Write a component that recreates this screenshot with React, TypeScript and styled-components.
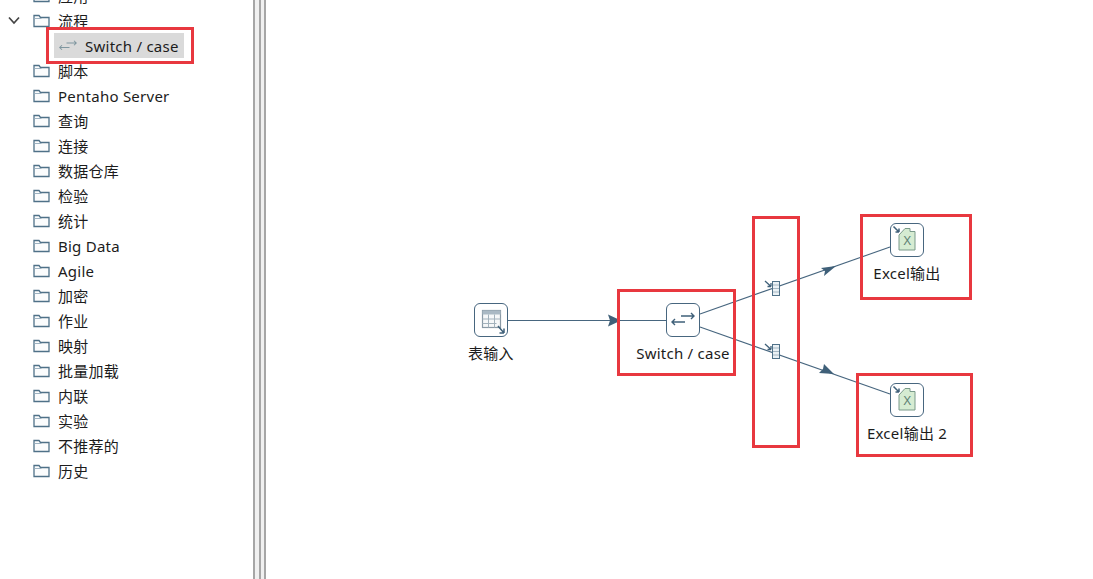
import React from 'react'
import styled, { createGlobalStyle } from 'styled-components'

const GlobalStyle = createGlobalStyle`
  html, body {
    margin: 0;
    height: 100%;
    background: #fff;
    overflow: hidden;
  }
  #root {
    height: 100%;
  }
`

const Page = styled.div`
  display: flex;
  width: 1093px;
  height: 579px;
  overflow: hidden;
  background: #fff;
  color: #1c1c1c;
  font-family: 'Noto Sans', 'Noto Sans CJK SC', sans-serif;
  font-size: 15px;
  letter-spacing: 0.25px;
`

const Sidebar = styled.aside`
  width: 253px;
  flex-shrink: 0;
  overflow: hidden;
`

const Tree = styled.ul`
  list-style: none;
  margin: -17px 0 0;
  padding: 0;
`

const Row = styled.li`
  display: flex;
  align-items: center;
  height: 25px;
  padding-left: 33px;
`

const Chevron = styled.svg`
  width: 14px;
  height: 9px;
  margin-left: -26px;
  margin-right: 12px;
  flex-shrink: 0;
`

const Folder = styled.svg`
  width: 17px;
  height: 14px;
  margin-right: 8px;
  flex-shrink: 0;
`

const SelectedRow = styled.li`
  position: relative;
  display: flex;
  align-items: center;
  height: 25px;
  margin-left: 54px;
  width: 130px;
  padding-left: 5px;
  box-sizing: border-box;
  background: #dadada;

  &::after {
    content: '';
    position: absolute;
    left: -8px;
    top: -6px;
    width: 148px;
    height: 37px;
    box-sizing: border-box;
    border: 3px solid #e8383f;
  }
`

const RowSwapIcon = styled.svg`
  width: 18px;
  height: 12px;
  margin-right: 8px;
  flex-shrink: 0;
`

const Sash = styled.div`
  display: flex;
  flex-shrink: 0;
  width: 13px;
  justify-content: space-between;
  background: #f0f0f0;
`

const SashLine = styled.span`
  width: 2px;
  background: #a6a6a6;
`

const Canvas = styled.main`
  position: relative;
  flex: 1;
  background: #fff;
`

const Hops = styled.svg`
  position: absolute;
  inset: 0;
  width: 100%;
  height: 100%;
`

// a step on the diagram, placed by the centre of its icon
const Step = styled.div<{ $cx: number; $y: number }>`
  position: absolute;
  left: ${(p) => p.$cx - 266 - 60}px;
  top: ${(p) => p.$y}px;
  width: 120px;
  display: flex;
  flex-direction: column;
  align-items: center;
  gap: 6px;
`

const StepBox = styled.div`
  width: 34px;
  height: 34px;
  box-sizing: border-box;
  border: 1px solid #47667f;
  border-radius: 6px;
  background: #fff;
`

const StepIcon = styled.svg`
  display: block;
  width: 32px;
  height: 32px;
`

const StepLabel = styled.span`
  line-height: 20px;
  white-space: nowrap;
`

const Callout = styled.div<{ $x: number; $y: number; $w: number; $h: number }>`
  position: absolute;
  left: ${(p) => p.$x - 266}px;
  top: ${(p) => p.$y}px;
  width: ${(p) => p.$w}px;
  height: ${(p) => p.$h}px;
  box-sizing: border-box;
  border: 3px solid #e8383f;
`

const folders = [
  '应用',
  '流程',
  'Switch / case',
  '脚本',
  'Pentaho Server',
  '查询',
  '连接',
  '数据仓库',
  '检验',
  '统计',
  'Big Data',
  'Agile',
  '加密',
  '作业',
  '映射',
  '批量加载',
  '内联',
  '实验',
  '不推荐的',
  '历史',
]

const FolderIcon = () => (
  <Folder viewBox="0 0 17 14" fill="none">
    <path d="M1 12.500V1.500h5l1.500 2H16v9z" stroke="#4f7188" strokeWidth="1.300" fill="#fbfcfd" />
    <path d="M1.500 4.500h7" stroke="#9db2c1" strokeWidth="1" />
  </Folder>
)

const SwapGlyph = ({ color }: { color: string }) => (
  <path
    d="M14 12h13M24 9l3 3-3 3M5 18h13M8 15l-3 3 3 3"
    fill="none"
    stroke={color}
    strokeWidth="1.400"
  />
)

const TableIcon = () => (
  <StepIcon viewBox="0 0 32 32" fill="none">
    <rect x="7.500" y="6.500" width="18" height="17" fill="#f6f8f9" stroke="#8a9aa6" strokeWidth="1.200" />
    <rect x="7.500" y="6.500" width="18" height="4" fill="#aab9c4" />
    <path d="M7.500 15h18M7.500 19.500h14M13.500 10.500v13M19.500 10.500v13" stroke="#a3b2bc" />
    <path d="M23 22l6 7M29 29v-4.500M29 29h-4.500" stroke="#3f6079" strokeWidth="1.500" />
  </StepIcon>
)

const SwitchIcon = () => (
  <StepIcon viewBox="0 0 32 32" fill="none">
    <SwapGlyph color="#3f6079" />
  </StepIcon>
)

const ExcelIcon = () => (
  <StepIcon viewBox="0 0 32 32" fill="none">
    <path d="M8 11l6-6.500h5v3h5V26H8z" fill="#d6ecd2" stroke="#7a9a8a" strokeWidth="1" />
    <text x="12.300" y="20.500" fontSize="12" fill="#5d7f72" fontFamily="Liberation Sans, sans-serif">
      X
    </text>
    <path d="M2.500 2.500l5.500 5.500M8 8V4.500M8 8H4.500" stroke="#3f6079" strokeWidth="1.500" />
  </StepIcon>
)

const App: React.FC = () => {
  return (
    <>
      <GlobalStyle />
      <Page>
        <Sidebar>
          <Tree>
            {folders.map((name) =>
              name === 'Switch / case' ? (
                <SelectedRow key={name}>
                  <RowSwapIcon viewBox="4 8 24 16">
                    <SwapGlyph color="#7f969f" />
                  </RowSwapIcon>
                  {name}
                </SelectedRow>
              ) : (
                <Row key={name}>
                  {name === '流程' && (
                    <Chevron viewBox="0 0 14 9" fill="none">
                      <path d="M2 1.500l5 5.500 5-5.500" stroke="#444" strokeWidth="1.700" />
                    </Chevron>
                  )}
                  <FolderIcon />
                  {name}
                </Row>
              )
            )}
          </Tree>
        </Sidebar>
        <Sash>
          <SashLine />
          <SashLine />
          <SashLine />
        </Sash>
        <Canvas>
          <Hops viewBox="0 0 827 579" fill="none">
            <g stroke="#47667f" strokeWidth="1.100">
              <path d="M242 320.500H400" />
              <path d="M434 314L624 247" />
              <path d="M434 327L624 394" />
            </g>
            <g fill="#3f6079">
              <path d="M355 320.500l-13-6 2 6-2 6z" />
              <path d="M570 266l-15 2 4 3-1 5z" />
              <path d="M568 374l-10-10-1 5-4 4z" />
            </g>
            <g stroke="#4f7188" strokeWidth="1" fill="#eaf1f5">
              <rect x="506.500" y="281.500" width="7" height="14" />
              <path d="M507 285h6M507 288.500h6M507 292h6" stroke="#a5b7c3" />
              <rect x="506.500" y="344.500" width="7" height="14" />
              <path d="M507 348h6M507 351.500h6M507 355h6" stroke="#a5b7c3" />
            </g>
            <g stroke="#3f6079" strokeWidth="1.300">
              <path d="M499 281l6 5.500M505 286.500v-3.500M505 286.500h-3.500" />
              <path d="M499 344l6 5.500M505 349.500V346M505 349.500h-3.500" />
            </g>
          </Hops>

          <Step $cx={491} $y={303}>
            <StepBox>
              <TableIcon />
            </StepBox>
            <StepLabel>表输入</StepLabel>
          </Step>
          <Step $cx={683} $y={303}>
            <StepBox>
              <SwitchIcon />
            </StepBox>
            <StepLabel>Switch / case</StepLabel>
          </Step>
          <Step $cx={907} $y={223}>
            <StepBox>
              <ExcelIcon />
            </StepBox>
            <StepLabel>Excel输出</StepLabel>
          </Step>
          <Step $cx={907} $y={383}>
            <StepBox>
              <ExcelIcon />
            </StepBox>
            <StepLabel>Excel输出 2</StepLabel>
          </Step>

          <Callout $x={617} $y={289} $w={119} $h={87} />
          <Callout $x={752} $y={216} $w={48} $h={232} />
          <Callout $x={860} $y={214} $w={112} $h={86} />
          <Callout $x={856} $y={373} $w={117} $h={84} />
        </Canvas>
      </Page>
    </>
  )
}

export default App
